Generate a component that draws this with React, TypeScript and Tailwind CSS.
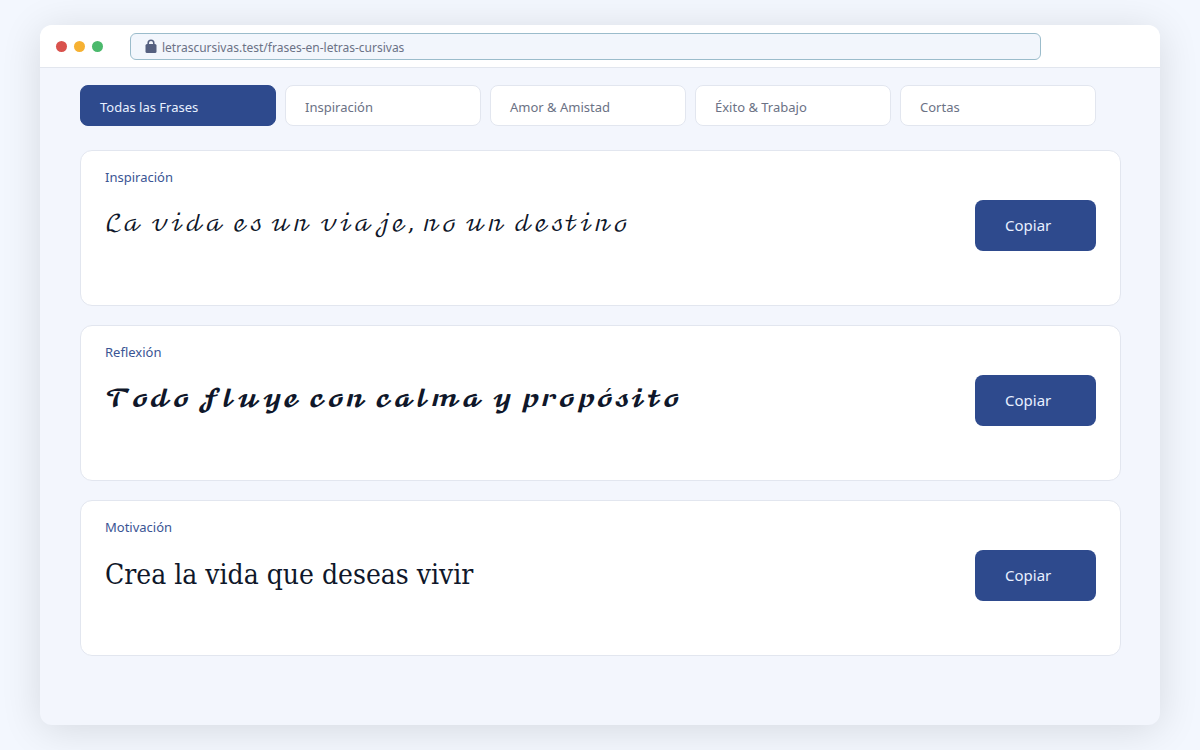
import { useState } from 'react'

const CATEGORIES = [
  'Todas las Frases',
  'Inspiración',
  'Amor & Amistad',
  'Éxito & Trabajo',
  'Cortas',
] as const

const PHRASES = [
  {
    category: 'Inspiración',
    text: 'ℒ𝒶 𝓋𝒾𝒹𝒶 ℯ𝓈 𝓊𝓃 𝓋𝒾𝒶𝒿ℯ, 𝓃ℴ 𝓊𝓃 𝒹ℯ𝓈𝓉𝒾𝓃ℴ',
    font: "font-['DejaVu_Math_TeX_Gyre','DejaVu_Serif',serif] text-[23px]",
  },
  {
    category: 'Reflexión',
    text: '𝓣𝓸𝓭𝓸 𝓯𝓵𝓾𝔂𝓮 𝓬𝓸𝓷 𝓬𝓪𝓵𝓶𝓪 𝔂 𝓹𝓻𝓸𝓹𝓸́𝓼𝓲𝓽𝓸',
    font: "font-['DejaVu_Math_TeX_Gyre','DejaVu_Serif',serif] text-[23px]",
  },
  {
    category: 'Motivación',
    text: 'Crea la vida que deseas vivir',
    font: "font-['DejaVu_Serif_Condensed','DejaVu_Serif',serif] text-[28px]",
  },
]

function LockIcon() {
  return (
    <svg className="w-3 h-4 shrink-0" viewBox="0 0 12 16" fill="none" aria-hidden="true">
      <path d="M3.2 7V5a2.8 2.8 0 0 1 5.6 0V7" stroke="#556080" strokeWidth={1.6} />
      <rect x="0.5" y="6" width="11" height="9" rx="1.5" fill="#556080" />
    </svg>
  )
}

interface PhraseCardProps {
  category: string
  text: string
  font: string
}

function PhraseCard({ category, text, font }: PhraseCardProps) {
  return (
    <article className="flex items-start justify-between min-h-39 px-6 rounded-xl bg-white border border-[#e2e6ef]">
      <div className="pt-4">
        <h2 className="text-[13px] leading-5 text-[#3a5594]">{category}</h2>
        <p className={`mt-[18px] leading-10 text-[#0f172a] ${font}`}>{text}</p>
      </div>
      <button
        type="button"
        onClick={() => navigator.clipboard?.writeText(text)}
        className="w-[121px] h-[51px] mt-[49px] pl-[30px] rounded-lg bg-[#2e4a8d] text-left text-[15px] text-[#e8f0ff]"
      >
        Copiar
      </button>
    </article>
  )
}

export default function App() {
  const [active, setActive] = useState<string>(CATEGORIES[0])
  const [url, setUrl] = useState('letrascursivas.test/frases-en-letras-cursivas')

  return (
    <div className="flex min-h-screen px-10 py-[25px] bg-[#f3f7fe] font-['Noto_Sans',sans-serif]">
      <div className="flex-1 rounded-xl bg-[#f3f6fd] shadow-[0_5px_40px_rgba(0,0,0,0.12)] overflow-hidden">
        {/* Browser bar */}
        <header className="flex items-center h-[43px] pl-4 pr-[119px] bg-white border-b border-[#e2e6ee]">
          <div className="flex gap-[7px] mr-[27px]">
            <span className="size-[11px] rounded-full bg-[#d9524d]" />
            <span className="size-[11px] rounded-full bg-[#f6b132]" />
            <span className="size-[11px] rounded-full bg-[#4bb96c]" />
          </div>
          <label className="flex flex-1 items-center gap-[5px] h-[27px] px-3.5 rounded-md border border-[#9bbccb] bg-[#f2f6fc]">
            <LockIcon />
            <input
              type="text"
              aria-label="Dirección"
              value={url}
              onChange={(e) => setUrl(e.target.value)}
              className="flex-1 min-w-0 pt-[3px] text-xs text-[#6b7286] focus:outline-none"
            />
          </label>
        </header>

        <main className="pl-10 pr-[39px] pt-[17px] pb-16">
          {/* Categories */}
          <nav className="grid grid-cols-5 gap-[9px] pr-[25px] mb-6">
            {CATEGORIES.map((category) => (
              <button
                key={category}
                type="button"
                onClick={() => setActive(category)}
                className={`h-[41px] pl-[19px] pt-1 rounded-lg text-left text-[13px] border ${
                  active === category
                    ? 'bg-[#2e4a8d] border-[#2e4a8d] text-[#e8f0ff]'
                    : 'bg-white border-[#e2e6ef] text-[#6b7285]'
                }`}
              >
                {category}
              </button>
            ))}
          </nav>

          {/* Phrases */}
          <div className="flex flex-col gap-[19px]">
            {PHRASES.map((phrase) => (
              <PhraseCard key={phrase.category} {...phrase} />
            ))}
          </div>
        </main>
      </div>
    </div>
  )
}
